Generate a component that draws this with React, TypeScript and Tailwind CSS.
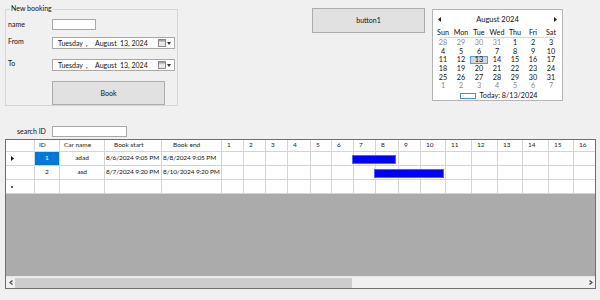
import React from "react";

const F = { fontFamily: "Lato, 'Liberation Sans', sans-serif" };

function DatePicker() {
  return (
    <div className="w-[123px] h-[12px] bg-white border border-[#a8a8a8] flex items-center pl-[5px] text-[7px] leading-none">
      <span className="w-[28px]">Tuesday</span>
      <span className="w-[9px]">,</span>
      <span className="w-[25px]">August</span>
      <span>13, 2024</span>
      <span className="ml-auto mr-[3px] flex items-center gap-[1px]">
        <svg width="8" height="8" viewBox="0 0 8 8">
          <rect x="0.5" y="0.5" width="7" height="7" fill="#e8e8e8" stroke="#8a8a8a" />
          <rect x="1" y="1" width="6" height="1.5" fill="#a0a0a0" />
        </svg>
        <svg width="4" height="3" viewBox="0 0 4 3">
          <path d="M0 0 L4 0 L2 3 Z" fill="#333" />
        </svg>
      </span>
    </div>
  );
}

const numCols = [22, 22, 22, 23, 21, 22, 22, 23, 22, 25, 26, 26, 25, 26, 25, 22];
const fixedCols = [
  { w: 29, label: "" },
  { w: 25, label: "ID", pl: "pl-[4px]" },
  { w: 45, label: "Car name", pl: "pl-[4px]" },
  { w: 57, label: "Book start", pl: "pl-[9px]" },
  { w: 60, label: "Book end", pl: "pl-[11px]" },
];

const rows = [
  { id: "1", name: "adad", start: "8/6/2024 9:05 PM", end: "8/8/2024 9:05 PM", bar: { left: 346, width: 44 }, current: true },
  { id: "2", name: "asd", start: "8/7/2024 9:20 PM", end: "8/10/2024 9:20 PM", bar: { left: 368, width: 70 }, current: false },
];

function Cell({ w, children, className = "" }: { w: number; children?: React.ReactNode; className?: string }) {
  return (
    <div className={`shrink-0 h-full border-r border-[#d4d4d4] flex items-center overflow-hidden whitespace-nowrap ${className}`} style={{ width: w }}>
      {children}
    </div>
  );
}

function NumCells() {
  return (
    <>
      {numCols.map((w, i) => (
        <Cell key={i} w={w} />
      ))}
    </>
  );
}

export default function App() {
  const weeks = [
    [["28", 1], ["29", 1], ["30", 1], ["31", 1], ["1", 0], ["2", 0], ["3", 0]],
    [["4", 0], ["5", 0], ["6", 0], ["7", 0], ["8", 0], ["9", 0], ["10", 0]],
    [["11", 0], ["12", 0], ["13", 2], ["14", 0], ["15", 0], ["16", 0], ["17", 0]],
    [["18", 0], ["19", 0], ["20", 0], ["21", 0], ["22", 0], ["23", 0], ["24", 0]],
    [["25", 0], ["26", 0], ["27", 0], ["28", 0], ["29", 0], ["30", 0], ["31", 0]],
    [["1", 1], ["2", 1], ["3", 1], ["4", 1], ["5", 1], ["6", 1], ["7", 1]],
  ] as [string, number][][];

  return (
    <div className="w-[600px] h-[300px] bg-[#f0f0f0] text-[#111] text-[7px] leading-none flex flex-col pt-[8px] overflow-hidden" style={F}>
      {/* top row */}
      <div className="flex items-start h-[98px] pl-[5px]">
        {/* group box */}
        <div className="relative mt-[1px] w-[173px] h-[97px] border border-[#d6d6d6]">
          <span className="absolute left-[4px] top-[-5px] bg-[#f0f0f0] px-[1px]">New booking</span>
          <div className="flex flex-col pl-[2px] pt-[9px]">
            <div className="flex items-center h-[11px]">
              <span className="w-[44px]">name</span>
              <div className="w-[44px] h-[11px] bg-white border border-[#a8a8a8]" />
            </div>
            <div className="flex items-start h-[12px] mt-[7px]">
              <span className="w-[44px] pt-[1px]">From</span>
              <DatePicker />
            </div>
            <div className="flex items-start h-[12px] mt-[10px]">
              <span className="w-[44px] pt-[1px]">To</span>
              <DatePicker />
            </div>
            <div className="flex mt-[10px] pl-[44px]">
              <div className="w-[113px] h-[24px] bg-[#e1e1e1] border border-[#adadad] flex items-center justify-center">Book</div>
            </div>
          </div>
        </div>

        {/* button1 */}
        <div className="ml-[134px] w-[113px] h-[25px] bg-[#e1e1e1] border border-[#adadad] flex items-center justify-center">button1</div>

        {/* calendar */}
        <div className="ml-[7px] mt-[1px] w-[131px] h-[92px] bg-white border border-[#b4b4b4] flex flex-col pt-[4px]">
          <div className="h-[12px] flex items-center justify-between px-[5px]">
            <svg width="3" height="5" viewBox="0 0 3 5"><path d="M3 0 L0 2.5 L3 5 Z" fill="#222" /></svg>
            <span className="text-[7.5px]">August 2024</span>
            <svg width="3" height="5" viewBox="0 0 3 5"><path d="M0 0 L3 2.5 L0 5 Z" fill="#222" /></svg>
          </div>
          <div className="mt-[3px] flex h-[9px] pl-[1px]">
            {["Sun", "Mon", "Tue", "Wed", "Thu", "Fri", "Sat"].map((d) => (
              <div key={d} className="w-[18px] flex items-center justify-center text-[7.2px]">{d}</div>
            ))}
          </div>
          <div className="mx-[7px] h-px bg-[#d8d8d8]" />
          <div className="flex flex-col pl-[1px]">
            {weeks.map((wk, i) => (
              <div key={i} className="flex h-[8.67px]">
                {wk.map(([d, t], j) => (
                  <div
                    key={j}
                    className={`w-[18px] flex items-center justify-center text-[7.2px] ${t === 1 ? "text-[#8a8a8a]" : ""} ${t === 2 ? "bg-[#d6d6d6] border border-[#5d9bd5]" : ""}`}
                  >
                    {d}
                  </div>
                ))}
              </div>
            ))}
          </div>
          <div className="flex items-center justify-center h-[9px] mt-[1px] pl-[2px]">
            <div className="w-[16px] h-[6px] border border-[#4a90d9] bg-white" />
            <span className="ml-[4px] text-[7.2px]">Today: 8/13/2024</span>
          </div>
        </div>
      </div>

      {/* search row */}
      <div className="flex items-center h-[11px] mt-[20px]">
        <span className="w-[52px] pl-[17px]">search ID</span>
        <div className="w-[75px] h-[11px] bg-white border border-[#a8a8a8]" />
      </div>

      {/* grid */}
      <div className="ml-[5px] mt-[2px] w-[591px] h-[150px] border border-[#6e6e6e] flex flex-col overflow-hidden text-[6.5px]">
        {/* header */}
        <div className="flex h-[12px] shrink-0 bg-white border-b border-[#d4d4d4] text-[#222]">
          {fixedCols.map((c, i) => (
            <Cell key={i} w={c.w} className={c.pl ?? ""}>{c.label}</Cell>
          ))}
          {numCols.map((w, i) => (
            <Cell key={i} w={w} className="pl-[5px]">{i + 1}</Cell>
          ))}
        </div>
        {rows.map((r) => (
          <div key={r.id} className="relative flex h-[14px] shrink-0 bg-white border-b border-[#d4d4d4]">
            <Cell w={29} className="pl-[5px]">
              {r.current ? (
                <svg width="3" height="5" viewBox="0 0 3 5"><path d="M0 0 L3 2.5 L0 5 Z" fill="#111" /></svg>
              ) : null}
            </Cell>
            <Cell w={25} className={`justify-center ${r.current ? "bg-[#0078d7] text-white" : ""}`}>{r.id}</Cell>
            <Cell w={45} className="justify-center">{r.name}</Cell>
            <Cell w={57} className="pl-[1px] tracking-[-0.1px]">{r.start}</Cell>
            <Cell w={60} className="pl-[1px] tracking-[-0.1px]">{r.end}</Cell>
            <NumCells />
            <div
              className="absolute top-[3px] h-[9px] bg-[#0000ff] border border-[#5a5aff]"
              style={{ left: r.bar.left, width: r.bar.width }}
            />
          </div>
        ))}
        <div className="flex h-[14px] shrink-0 bg-white border-b border-[#d4d4d4]">
          <Cell w={29} className="pl-[5px]">
            <span className="w-[2px] h-[2px] rounded-full bg-[#222]" />
          </Cell>
          <Cell w={25} />
          <Cell w={45} />
          <Cell w={57} />
          <Cell w={60} />
          <NumCells />
        </div>
        <div className="flex-1 bg-[#ababab]" />
        <div className="h-[12px] shrink-0 bg-[#f0f0f0] flex items-center border-t border-[#e6e6e6]">
          <div className="w-[9px] flex justify-center">
            <svg width="4" height="5" viewBox="0 0 4 5"><path d="M3.5 0.5 L1 2.5 L3.5 4.5" stroke="#444" fill="none" strokeWidth="1.2" /></svg>
          </div>
          <div className="w-[337px] h-[10px] bg-[#cdcdcd]" />
          <div className="flex-1" />
          <div className="w-[9px] flex justify-center">
            <svg width="4" height="5" viewBox="0 0 4 5"><path d="M0.5 0.5 L3 2.5 L0.5 4.5" stroke="#444" fill="none" strokeWidth="1.2" /></svg>
          </div>
        </div>
      </div>
    </div>
  );
}
